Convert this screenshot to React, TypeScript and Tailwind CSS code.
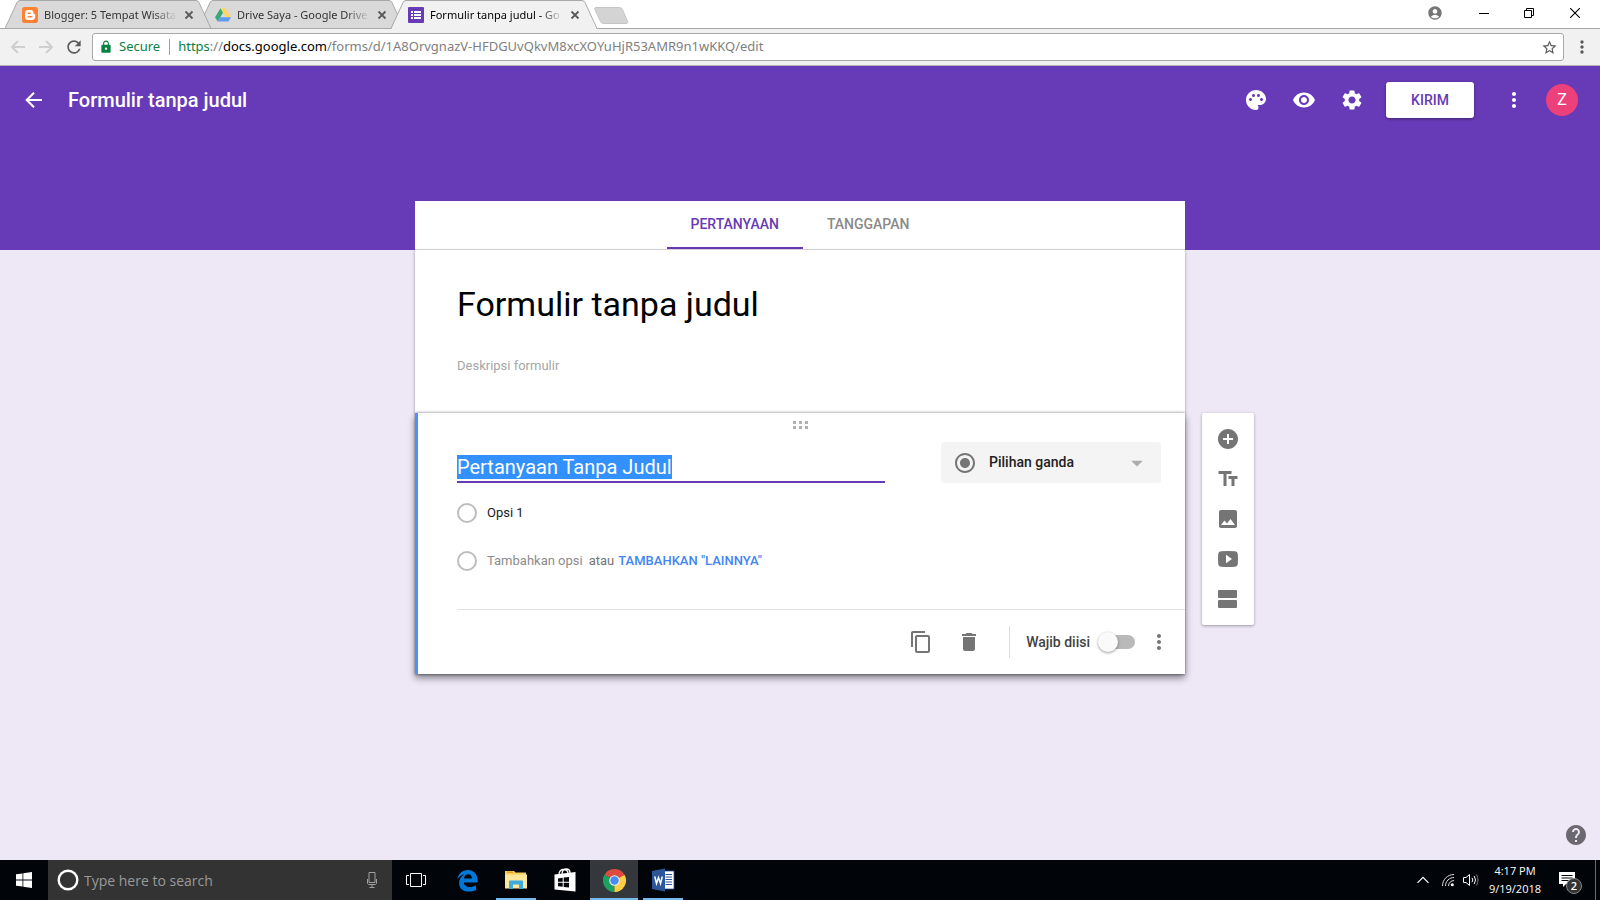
import { useEffect, useRef, type ReactNode } from "react";
import {
  MdAccountCircle,
  MdAddCircle,
  MdContentCopy,
  MdDelete,
  MdHelp,
  MdImage,
  MdLock,
  MdMoreVert,
  MdPalette,
  MdRadioButtonChecked,
  MdRefresh,
  MdSettings,
  MdStarBorder,
  MdTextFields,
  MdVisibility,
  MdArrowDropDown,
} from "react-icons/md";

function BloggerLogo() {
  return (
    <svg viewBox="0 0 16 16" className="size-4 shrink-0" aria-hidden="true">
      <rect width="16" height="16" rx="2.5" fill="#ff8133" />
      <path
        fill="#fff"
        fillRule="evenodd"
        d="M6 3h2.6C10.400 3 11.500 4.200 11.500 5.800c0 .9.3 1.200.9 1.200.5 0 .8.3.8.8V10c0 1.800-1.300 3-3.100 3H6c-1.800 0-3-1.300-3-3V6c0-1.800 1.200-3 3-3zm.2 2.600a.7.7 0 0 0 0 1.400h2a.7.7 0 0 0 0-1.400zm0 3.400a.7.7 0 0 0 0 1.400h3.600a.7.7 0 0 0 0-1.400z"
      />
    </svg>
  );
}

function DriveLogo() {
  return (
    <svg viewBox="0 0 16 16" className="size-4 shrink-0" aria-hidden="true">
      <path fill="#ffd665" d="M5.500 1.300h5L16 10.300h-5.200z" />
      <path fill="#3aa873" d="M5.500 1.300 8 5.700 2.700 14.600 0 10.300z" />
      <path fill="#5f9bf5" d="M5.300 10.300H16l-2.600 4.300H2.700z" />
    </svg>
  );
}

function FormsLogo() {
  return (
    <svg viewBox="0 0 16 16" className="size-4 shrink-0" aria-hidden="true">
      <rect width="16" height="16" rx="1" fill="#673ab7" />
      <path
        fill="#fff"
        d="M3 4h2v2H3zM6 4h7v2H6zM3 7h2v2H3zM6 7h7v2H6zM3 10h2v2H3zM6 10h7v2H6z"
      />
    </svg>
  );
}

function BrowserTab({
  icon,
  title,
  active = false,
  className,
}: {
  icon: ReactNode;
  title: string;
  active?: boolean;
  className: string;
}) {
  return (
    <div className={`relative flex h-[29px] w-[206px] shrink-0 items-center pr-[14px] pl-[17px] ${className}`}>
      <svg
        viewBox="0 0 206 29"
        className="absolute inset-0 h-[29px] w-[206px]"
        aria-hidden="true"
      >
        <path
          d="M0 29 L0.500 28.500 L12 2.500 Q13 0.500 15 0.500 H191 Q193 0.500 194 2.500 L205.500 28.500 V29 Z"
          fill={active ? "#f1f1f1" : "#d9d9d9"}
        />
        <path
          d="M0 28.500 L12 2.500 Q13 0.500 15 0.500 H191 Q193 0.500 194 2.500 L206 28.500"
          fill="none"
          stroke="#a8a8a8"
        />
        {!active && <path d="M0 28.500 H206" stroke="#a8a8a8" />}
      </svg>
      <a
        href="#"
        className="relative flex min-w-0 flex-1 items-center gap-[6px] text-[11px] leading-4 text-[#333]"
      >
        {icon}
        <span
          className={`min-w-0 flex-1 overflow-hidden whitespace-nowrap [mask-image:linear-gradient(to_right,black_82%,transparent)] ${
            active ? "text-black" : ""
          }`}
        >
          {title}
        </span>
      </a>
      <button type="button" aria-label="Close tab" className="relative ml-1 size-4">
        <svg viewBox="0 0 16 16" className="size-4" aria-hidden="true">
          <path d="M4.500 4.500l7 7M11.500 4.500l-7 7" stroke="#5a5a5a" strokeWidth="1.800" />
        </svg>
      </button>
    </div>
  );
}

function TabStrip() {
  return (
    <div className="flex h-[29px] items-start bg-white pl-[5px] shadow-[inset_0_-1px_0_#a8a8a8]">
      <BrowserTab className="z-20" icon={<BloggerLogo />} title="Blogger: 5 Tempat Wisata" />
      <BrowserTab className="z-10 -ml-[13px]" icon={<DriveLogo />} title="Drive Saya - Google Drive" />
      <BrowserTab className="z-30 -ml-[13px]" icon={<FormsLogo />} title="Formulir tanpa judul - Go" active />
      <button type="button" aria-label="New tab" className="-ml-1 mt-[6px] h-[19px] w-9">
        <svg viewBox="0 0 36 19" className="h-[19px] w-9" aria-hidden="true">
          <path
            d="M3 1.500h23.500q2 0 3 2l5 12q.8 2-1.500 2H11q-2.500 0-3.500-2l-5.500-12q-1-2 1-2z"
            fill="#d4d4d4"
            stroke="#c4c4c4"
          />
        </svg>
      </button>
      <div className="ml-auto flex h-[26px] items-center">
        <button type="button" aria-label="Profile" className="mr-[10px] flex w-8 justify-center text-[#757575]">
          <MdAccountCircle size={16} />
        </button>
        <button type="button" aria-label="Minimize" className="flex w-[46px] justify-center">
          <svg viewBox="0 0 10 10" className="size-[10px]" aria-hidden="true">
            <path d="M0 5.500h10" stroke="#000" />
          </svg>
        </button>
        <button type="button" aria-label="Restore" className="flex w-[44px] justify-center">
          <svg viewBox="0 0 10 10" className="size-[10px]" fill="none" stroke="#000" aria-hidden="true">
            <path d="M.5 2.500h7v7h-7zM2.500 2.500v-2h7v7h-2" />
          </svg>
        </button>
        <button type="button" aria-label="Close" className="mr-px flex w-[48px] justify-center">
          <svg viewBox="0 0 10 10" className="size-[10px]" aria-hidden="true">
            <path d="M0 0l10 10M10 0L0 10" stroke="#000" strokeWidth="1.100" />
          </svg>
        </button>
      </div>
    </div>
  );
}

function AddressBar() {
  return (
    <div className="flex h-[37px] items-center border-b border-[#b5b3ba] bg-[#f1f1f1]">
      <div className="flex shrink-0 items-center gap-3 pr-[10px] pl-[10px]">
        <button type="button" aria-label="Back" className="size-4">
          <svg viewBox="0 0 16 16" className="size-4" fill="none" stroke="#cfcfcf" strokeWidth="2" aria-hidden="true">
            <path d="M15 8H2.500M8 2L2 8l6 6" />
          </svg>
        </button>
        <button type="button" aria-label="Forward" className="size-4">
          <svg viewBox="0 0 16 16" className="size-4" fill="none" stroke="#cfcfcf" strokeWidth="2" aria-hidden="true">
            <path d="M1 8h12.500M8 2l6 6-6 6" />
          </svg>
        </button>
        <button type="button" aria-label="Reload" className="flex size-4 items-center justify-center text-[#5a5a5a]">
          <MdRefresh size={20} className="shrink-0" />
        </button>
      </div>
      <div className="flex h-[28px] min-w-0 flex-1 items-center rounded-[3px] border border-[#a9a9a9] bg-white pr-[5px] pl-[6px] text-[13px]">
        <MdLock size={14} className="shrink-0 text-[#0b8043]" />
        <span className="ml-[6px] text-[#0b8043]">Secure</span>
        <span className="mr-2 ml-[9px] h-4 w-px bg-[#a0a0a0]" />
        <a href="#" className="min-w-0 flex-1 truncate text-[#808080]">
          <span className="text-[#0b8043]">https</span>://<span className="text-black">docs.google.com</span>
          /forms/d/1A8OrvgnazV-HFDGUvQkvM8xcXOYuHjR53AMR9n1wKKQ/edit
        </a>
        <button type="button" aria-label="Bookmark" className="text-[#5a5a5a]">
          <MdStarBorder size={17} />
        </button>
      </div>
      <button type="button" aria-label="Menu" className="flex w-9 shrink-0 justify-center text-[#5a5a5a]">
        <MdMoreVert size={20} />
      </button>
    </div>
  );
}

function AppHeader() {
  return (
    <header className="flex h-[135px] items-start bg-[#673ab7] pr-[22px] pl-[22px] text-white">
      <div className="flex h-[68px] flex-1 items-center">
        <button type="button" aria-label="Kembali" className="size-6">
          <svg viewBox="0 0 24 24" className="size-6" fill="none" stroke="#fff" strokeWidth="2" aria-hidden="true">
            <path d="M20 12H5.500M12 4.700L4.700 12l7.300 7.300" />
          </svg>
        </button>
        <h1 className="ml-[22px] text-[20px] leading-6 font-medium">Formulir tanpa judul</h1>
        <div className="ml-auto flex items-center gap-6">
          <button type="button" aria-label="Palet warna">
            <MdPalette size={24} />
          </button>
          <button type="button" aria-label="Pratinjau">
            <MdVisibility size={24} />
          </button>
          <button type="button" aria-label="Setelan">
            <MdSettings size={24} />
          </button>
        </div>
        <button
          type="button"
          className="ml-[22px] h-9 w-[88px] rounded-[3px] bg-white text-[14px] font-medium text-[#673ab7] shadow-[0_1px_3px_rgba(0,0,0,0.4)]"
        >
          KIRIM
        </button>
        <button type="button" aria-label="Lainnya" className="ml-7">
          <MdMoreVert size={24} />
        </button>
        <button
          type="button"
          aria-label="Akun Z"
          className="ml-5 size-8 rounded-full bg-[#ec407a] text-[16px] leading-8"
        >
          Z
        </button>
      </div>
    </header>
  );
}

function FormTabs() {
  return (
    <div className="bg-[#673ab7]">
      <nav className="mx-auto flex h-[49px] max-w-[770px] justify-center border-b border-[#e0e0e0] bg-white text-[14px] font-medium">
        <a
          href="#pertanyaan"
          aria-current="page"
          className="flex items-center border-b-2 border-[#673ab7] px-6 text-[#673ab7]"
        >
          PERTANYAAN
        </a>
        <a href="#tanggapan" className="flex items-center border-b-2 border-transparent px-6 text-[#8a8a8a]">
          TANGGAPAN
        </a>
      </nav>
    </div>
  );
}

function FormIntro() {
  return (
    <section className="h-[163px] bg-white px-[42px] pt-[30px] shadow-[0_1px_3px_rgba(0,0,0,0.35)]">
      <input
        aria-label="Judul formulir"
        defaultValue="Formulir tanpa judul"
        className="block h-12 w-full text-[34px] leading-[48px] text-black outline-none"
      />
      <input
        aria-label="Deskripsi formulir"
        placeholder="Deskripsi formulir"
        className="mt-7 block h-5 w-full text-[13px] leading-5 outline-none placeholder:text-[#a6a6a6]"
      />
    </section>
  );
}

function QuestionCard() {
  const titleRef = useRef<HTMLInputElement>(null);

  useEffect(() => {
    titleRef.current?.focus();
    titleRef.current?.select();
  }, []);

  return (
    <section className="relative border-l-[3px] border-[#4d90fe] bg-white pl-[39px] shadow-[0_-1px_2px_rgba(0,0,0,0.2),0_1px_2px_rgba(0,0,0,0.3),0_4px_7px_rgba(0,0,0,0.45)]">
      <div className="flex h-[29px] justify-center pt-2 pr-10">
        <svg viewBox="0 0 16 8" className="h-2 w-4" fill="#b0b0b0" aria-hidden="true">
          <path d="M0 0h3v3H0zM6 0h3v3H6zM12 0h3v3h-3zM0 5h3v3H0zM6 5h3v3H6zM12 5h3v3h-3z" />
        </svg>
      </div>
      <div className="flex items-start justify-between pr-6">
        <input
          ref={titleRef}
          aria-label="Pertanyaan"
          defaultValue="Pertanyaan Tanpa Judul"
          className="mt-[13px] h-7 w-[428px] border-b-2 border-[#673ab7] pb-[2px] text-[20px] leading-6 text-black outline-none selection:bg-[#3390ff] selection:text-white"
        />
        <div className="relative flex h-[41px] w-[220px] items-center rounded-[3px] bg-[#f4f4f4]">
          <MdRadioButtonChecked size={24} className="pointer-events-none absolute left-3 text-[#757575]" />
          <select
            aria-label="Jenis pertanyaan"
            className="h-full w-full appearance-none pl-12 text-[14px] font-medium text-[#212121] outline-none"
          >
            <option>Pilihan ganda</option>
          </select>
          <MdArrowDropDown size={28} className="pointer-events-none absolute right-[10px] text-[#acacac]" />
        </div>
      </div>
      <div className="mt-5 flex h-5 items-center text-[13px]">
        <input
          id="option-1"
          type="radio"
          disabled
          className="size-5 appearance-none rounded-full border-2 border-[#bdbdbd]"
        />
        <label htmlFor="option-1" className="ml-[10px] text-[#212121]">
          Opsi 1
        </label>
      </div>
      <div className="mt-7 flex h-5 items-center text-[13px] text-[#757575]">
        <input
          id="option-add"
          type="radio"
          disabled
          className="size-5 appearance-none rounded-full border-2 border-[#bdbdbd]"
        />
        <label htmlFor="option-add" className="ml-[10px] text-[#8c8c8c]">
          Tambahkan opsi
        </label>
        <span className="ml-[6px]">atau</span>
        <button type="button" className="ml-1 font-medium text-[#4285f4]">
          TAMBAHKAN "LAINNYA"
        </button>
      </div>
      <div className="mt-[38px] flex h-[65px] items-center justify-end border-t border-[#e0e0e0] pr-[14px] text-[#757575]">
        <button type="button" aria-label="Duplikat">
          <MdContentCopy size={24} />
        </button>
        <button type="button" aria-label="Hapus" className="ml-6">
          <MdDelete size={24} />
        </button>
        <span className="mr-4 ml-[28px] h-8 w-px bg-[#dcdcdc]" />
        <label className="flex items-center text-[14px] font-medium text-[#424242]">
          Wajib diisi
          <span className="relative ml-2 flex h-5 w-[37px] items-center justify-end">
            <input type="checkbox" role="switch" className="peer absolute inset-0 opacity-0" />
            <span className="h-[14px] w-[34px] rounded-full bg-[#b9b9b9]" />
            <span className="absolute left-0 size-5 rounded-full bg-[#fafafa] shadow-[0_1px_3px_rgba(0,0,0,0.4)] peer-checked:left-[17px]" />
          </span>
        </label>
        <button type="button" aria-label="Opsi lainnya" className="ml-3">
          <MdMoreVert size={24} />
        </button>
      </div>
    </section>
  );
}

function AddToolbar() {
  return (
    <div className="ml-[17px] flex h-[212px] w-[52px] flex-col items-center gap-4 rounded-[2px] bg-white pt-[14px] text-[#757575] shadow-[0_1px_3px_rgba(0,0,0,0.35)]">
      <button type="button" aria-label="Tambahkan pertanyaan">
        <MdAddCircle size={24} />
      </button>
      <button type="button" aria-label="Tambahkan judul">
        <MdTextFields size={24} />
      </button>
      <button type="button" aria-label="Tambahkan gambar">
        <MdImage size={24} />
      </button>
      <button type="button" aria-label="Tambahkan video">
        <svg viewBox="0 0 24 24" className="size-6" aria-hidden="true">
          <path
            fill="currentColor"
            fillRule="evenodd"
            d="M5 4.200Q12 3.600 19 4.200Q21.600 4.400 21.800 7Q22.200 12 21.800 17Q21.600 19.600 19 19.800Q12 20.400 5 19.800Q2.400 19.600 2.200 17Q1.800 12 2.200 7Q2.400 4.400 5 4.200zM10 7.700v8.600l6-4.300z"
          />
        </svg>
      </button>
      <button type="button" aria-label="Tambahkan bagian">
        <svg viewBox="0 0 24 24" className="size-6" aria-hidden="true">
          <rect x="2" y="3" width="19" height="8" rx="1" fill="currentColor" />
          <rect x="2" y="13" width="19" height="8" rx="1" fill="currentColor" />
        </svg>
      </button>
    </div>
  );
}

function EdgeLogo() {
  return (
    <svg viewBox="0 0 24 24" className="size-[23px]" aria-hidden="true">
      <path
        fill="#0078d7"
        d="M1.500 10.600C2.300 4.700 6.500 1 12.300 1c6.200 0 10.200 4.500 10.200 10.200v3H8.200c.2 3 2.600 4.600 6.200 4.600 2.500 0 4.700-.8 6.600-1.900v5c-2.200 1.200-4.800 1.700-7.600 1.700-6.300 0-10.200-3.600-10.200-9 0-4 2.200-7.100 5.600-8.800-3.500.4-5.800 2.400-7.300 4.800zM8.300 9.800h8.300c0-2.700-1.300-4.300-3.900-4.300-2.500 0-4.100 1.700-4.400 4.300z"
      />
    </svg>
  );
}

function ExplorerLogo() {
  return (
    <svg viewBox="0 0 24 24" className="size-6" aria-hidden="true">
      <path d="M1 3h9l1.500 1.500H22V8H1z" fill="#f8cf59" />
      <path d="M3 3.500h6v1.300H3z" fill="#e8941a" />
      <path d="M1 6.500h22v14H1z" fill="#ffe799" />
      <path d="M5 13.500q0-1 1-1h12q1 0 1 1V21h-4v-4.500H9V21H5z" fill="#3cabdd" />
    </svg>
  );
}

function StoreLogo() {
  return (
    <svg viewBox="0 0 24 26" className="h-[26px] w-6" aria-hidden="true">
      <path
        d="M6 8C6 4 8 2.500 10.500 2.500s4.500 1.500 4.500 4M9 7c0-3.500 2-5 4.500-5S17 3.500 17 6"
        fill="none"
        stroke="#fff"
        strokeWidth="1.300"
      />
      <path d="M1.500 7.500L22.500 5v19.500L1.500 22.500z" fill="#fff" />
      <path
        d="M5 11.500l4.700-.7v4H5zM10.700 10.600l5.300-.7v4.900h-5.300zM5 15.800h4.700v4L5 19.200zM10.700 15.800H16v4.800l-5.300-.6z"
        fill="#05070a"
      />
    </svg>
  );
}

function ChromeLogo() {
  return (
    <svg viewBox="0 0 24 24" className="size-[23px]" aria-hidden="true">
      <path d="M12 12L1.600 6A12 12 0 0 1 22.400 6z" fill="#dd4b3e" />
      <path d="M12 12L12 24A12 12 0 0 1 1.600 6z" fill="#1da15f" />
      <path d="M12 12L22.400 6A12 12 0 0 1 12 24z" fill="#ffce43" />
      <path d="M12 6.500h10.600L22 5.500 12 4z" fill="#dd4b3e" />
      <path d="M7.200 14.700L1.600 6l-.8 3 5 8z" fill="#1da15f" />
      <path d="M16.800 14.700L12 24l3-1z" fill="#ffce43" />
      <circle cx="12" cy="12" r="5.500" fill="#f1f1f1" />
      <circle cx="12" cy="12" r="4.400" fill="#4a8af4" />
    </svg>
  );
}

function WordLogo() {
  return (
    <svg viewBox="0 0 24 24" className="size-6" aria-hidden="true">
      <path d="M12 3h11v18H12z" fill="#fff" stroke="#2b579a" strokeWidth=".8" />
      <path d="M14.500 6.500H21M14.500 9H21M14.500 11.500H21M14.500 14H21M14.500 16.500H21" stroke="#2b579a" />
      <path d="M1 3l13-2.500v23L1 21z" fill="#2b579a" />
      <path d="M3.800 8.500L5.500 15.500L7.500 9.500L9.500 15.500L11.300 8.500" fill="none" stroke="#fff" strokeWidth="1.500" />
    </svg>
  );
}

function TaskButton({
  label,
  children,
  running = false,
  active = false,
}: {
  label: string;
  children: ReactNode;
  running?: boolean;
  active?: boolean;
}) {
  return (
    <button
      type="button"
      aria-label={label}
      className={`relative flex h-10 w-12 items-center justify-center ${active ? "bg-[#34373b]" : ""}`}
    >
      {children}
      {(running || active) && (
        <span className={`absolute bottom-0 h-[2px] bg-[#76b9ed] ${active ? "inset-x-0" : "inset-x-1"}`} />
      )}
    </button>
  );
}

function Taskbar() {
  return (
    <footer className="flex h-10 items-center bg-[#010409] text-white">
      <button type="button" aria-label="Start" className="flex h-10 w-12 shrink-0 items-center justify-center">
        <svg viewBox="0 0 16 16" className="size-4" fill="#fff" aria-hidden="true">
          <path d="M0 2.300l6.500-.9v6.100H0zM7.300 1.200L16 0v7.500H7.300zM0 8.400h6.500v6.200L0 13.700zM7.300 8.400H16V16l-8.700-1.200z" />
        </svg>
      </button>
      <label className="flex h-10 w-[344px] items-center bg-[#333] pr-3 pl-2">
        <svg viewBox="0 0 24 24" className="size-6 shrink-0" aria-hidden="true">
          <circle cx="12" cy="12" r="9.300" fill="none" stroke="#fff" strokeWidth="2.400" />
        </svg>
        <input
          aria-label="Type here to search"
          placeholder="Type here to search"
          className="ml-1 min-w-0 flex-1 text-[14px] outline-none placeholder:text-[#9a9a9a]"
        />
        <svg viewBox="0 0 16 18" className="h-[18px] w-4 shrink-0" fill="none" stroke="#a0a0a0" aria-hidden="true">
          <path d="M5 1.500h6v10H5zM3.500 8v4.500l1 1h7l1-1V8M8 13.500v3M5.500 16.500h5" />
        </svg>
      </label>
      <TaskButton label="Task View">
        <svg viewBox="0 0 20 14" className="h-[14px] w-5" fill="none" stroke="#fff" aria-hidden="true">
          <path d="M4.500.5h11v13h-11zM3 2.500H.5v9H3M17 2.500h2.500v9H17" />
        </svg>
      </TaskButton>
      <div className="ml-[3px] flex gap-px">
        <TaskButton label="Microsoft Edge">
          <EdgeLogo />
        </TaskButton>
        <TaskButton label="File Explorer" running>
          <ExplorerLogo />
        </TaskButton>
        <TaskButton label="Store">
          <StoreLogo />
        </TaskButton>
        <TaskButton label="Google Chrome" active>
          <ChromeLogo />
        </TaskButton>
        <TaskButton label="Word" running>
          <WordLogo />
        </TaskButton>
      </div>
      <div className="ml-auto flex h-10 items-center">
        <button type="button" aria-label="Show hidden icons" className="flex w-6 justify-center">
          <svg viewBox="0 0 12 8" className="h-2 w-3" fill="none" stroke="#fff" strokeWidth="1.200" aria-hidden="true">
            <path d="M.5 6.800L6 1.300l5.500 5.500" />
          </svg>
        </button>
        <button type="button" aria-label="Network" className="flex w-[26px] justify-center">
          <svg viewBox="0 0 14 14" className="size-[14px]" fill="none" stroke="#ddd" aria-hidden="true">
            <path d="M1.500 13C1.500 6.500 6.500 1.500 13 1.500M4.500 13C4.500 8.300 8.300 4.500 13 4.500M7.500 13c0-3 2.500-5.500 5.500-5.500" />
            <circle cx="11.300" cy="11.700" r="1.500" fill="#fff" stroke="none" />
          </svg>
        </button>
        <button type="button" aria-label="Volume" className="flex w-5 justify-center">
          <svg viewBox="0 0 16 14" className="h-[14px] w-4" fill="none" stroke="#fff" aria-hidden="true">
            <path d="M.5 4.500H3l3.500-3v11L3 9.500H.5zM9 4.800q1.500 2.200 0 4.400M11.200 3q2.600 4 0 8" />
            <path d="M13.400 1.500q3.200 5.500 0 11" stroke="#777" />
          </svg>
        </button>
        <button type="button" className="w-[68px] text-center text-[11px] leading-[18px]">
          4:17 PM
          <br />
          9/19/2018
        </button>
        <button type="button" aria-label="Notifications" className="relative mr-1 ml-[10px] flex h-10 w-8 items-center">
          <svg viewBox="0 0 16 16" className="size-4" aria-hidden="true">
            <path d="M0 0h16v12H7l-3 3v-3H0z" fill="#fff" />
            <path d="M2.500 3.500h11M2.500 6h11M2.500 8.500h7" stroke="#05070a" />
          </svg>
          <span className="absolute top-[18px] left-[7px] size-4 rounded-full border border-[#888] bg-[#333] text-[11px] leading-[14px] font-semibold">
            2
          </span>
        </button>
        <span className="mr-1 h-10 w-px bg-[#6b6b6b]" />
      </div>
    </footer>
  );
}

export default function App() {
  return (
    <div className="flex min-h-screen flex-col bg-[#ede7f6]">
      <div className="font-['Noto_Sans','Open_Sans',sans-serif]">
        <TabStrip />
        <AddressBar />
      </div>
      <main className="flex flex-1 flex-col font-[Roboto,sans-serif]">
        <AppHeader />
        <FormTabs />
        <div className="grid grid-cols-[1fr_minmax(0,770px)_1fr] items-start">
          <div className="col-start-2">
            <FormIntro />
          </div>
          <div className="col-start-2">
            <QuestionCard />
          </div>
          <AddToolbar />
        </div>
        <button type="button" aria-label="Bantuan" className="mt-auto mr-3 mb-[13px] self-end text-[#6b6870]">
          <MdHelp size={24} />
        </button>
      </main>
      <div className="font-['Open_Sans','Noto_Sans',sans-serif]">
        <Taskbar />
      </div>
    </div>
  );
}
